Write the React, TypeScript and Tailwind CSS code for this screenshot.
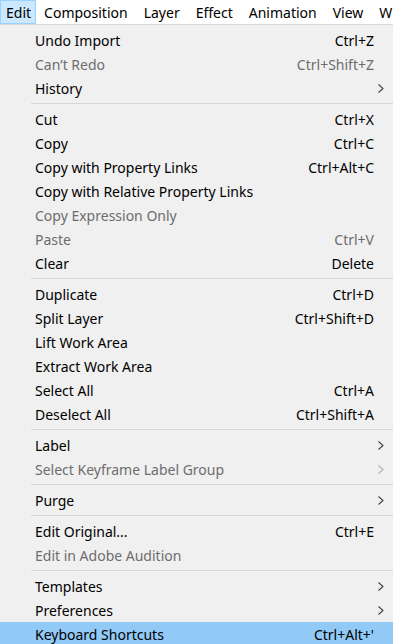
type Item =
  | { sep: true }
  | { label: string; shortcut?: string; disabled?: boolean; sub?: boolean; active?: boolean }

const MENUS = ['Edit', 'Composition', 'Layer', 'Effect', 'Animation', 'View', 'Window']

const ITEMS: Item[] = [
  { label: 'Undo Import', shortcut: 'Ctrl+Z' },
  { label: 'Can\u2019t Redo', shortcut: 'Ctrl+Shift+Z', disabled: true },
  { label: 'History', sub: true },
  { sep: true },
  { label: 'Cut', shortcut: 'Ctrl+X' },
  { label: 'Copy', shortcut: 'Ctrl+C' },
  { label: 'Copy with Property Links', shortcut: 'Ctrl+Alt+C' },
  { label: 'Copy with Relative Property Links' },
  { label: 'Copy Expression Only', disabled: true },
  { label: 'Paste', shortcut: 'Ctrl+V', disabled: true },
  { label: 'Clear', shortcut: 'Delete' },
  { sep: true },
  { label: 'Duplicate', shortcut: 'Ctrl+D' },
  { label: 'Split Layer', shortcut: 'Ctrl+Shift+D' },
  { label: 'Lift Work Area' },
  { label: 'Extract Work Area' },
  { label: 'Select All', shortcut: 'Ctrl+A' },
  { label: 'Deselect All', shortcut: 'Ctrl+Shift+A' },
  { sep: true },
  { label: 'Label', sub: true },
  { label: 'Select Keyframe Label Group', sub: true, disabled: true },
  { sep: true },
  { label: 'Purge', sub: true },
  { sep: true },
  { label: 'Edit Original...', shortcut: 'Ctrl+E' },
  { label: 'Edit in Adobe Audition', disabled: true },
  { sep: true },
  { label: 'Templates', sub: true },
  { label: 'Preferences', sub: true },
  { label: 'Keyboard Shortcuts', shortcut: "Ctrl+Alt+'", active: true },
]

function Chevron({ disabled }: { disabled?: boolean }) {
  return (
    <svg width="6" height="9" viewBox="0 0 6 9" className={disabled ? 'text-[#b4b4b4]' : 'text-[#404040]'}>
      <path d="M0.5 0.5 L5 4.5 L0.5 8.5" fill="none" stroke="currentColor" strokeWidth="1.1" />
    </svg>
  )
}

export default function App() {
  return (
    <div className="w-[393px] h-[644px] overflow-hidden bg-[#f0f0f0] text-[14px] text-black font-['Noto_Sans',sans-serif]">
      {/* menu bar */}
      <div className="flex h-[25px] bg-white border-b border-[#d9d9d9] whitespace-nowrap overflow-hidden">
        {MENUS.map((m, i) => (
          <div
            key={m}
            className={
              i === 0
                ? 'h-[24px] pl-[5px] pr-[4px] flex items-center bg-[#cce8ff] border border-[#99d1ff]'
                : 'h-[24px] px-[8px] flex items-center'
            }
          >
            {m}
          </div>
        ))}
      </div>

      {/* dropdown */}
      <div className="pt-[3px]">
        {ITEMS.map((it, i) =>
          'sep' in it ? (
            <div key={i} className="py-[3px] pl-[31px]">
              <div className="h-px bg-[#d7d7d7]" />
            </div>
          ) : (
            <div
              key={i}
              className={`flex items-center h-6 pl-[35px] whitespace-nowrap ${it.active ? 'bg-[#91c9f7]' : ''} ${
                it.disabled ? 'text-[#6d6d6d]' : ''
              }`}
            >
              <span>{it.label}</span>
              <span className="ml-auto">{it.shortcut}</span>
              <span className="w-[19px] flex justify-end pr-[9px]">{it.sub && <Chevron disabled={it.disabled} />}</span>
            </div>
          )
        )}
      </div>
    </div>
  )
}
